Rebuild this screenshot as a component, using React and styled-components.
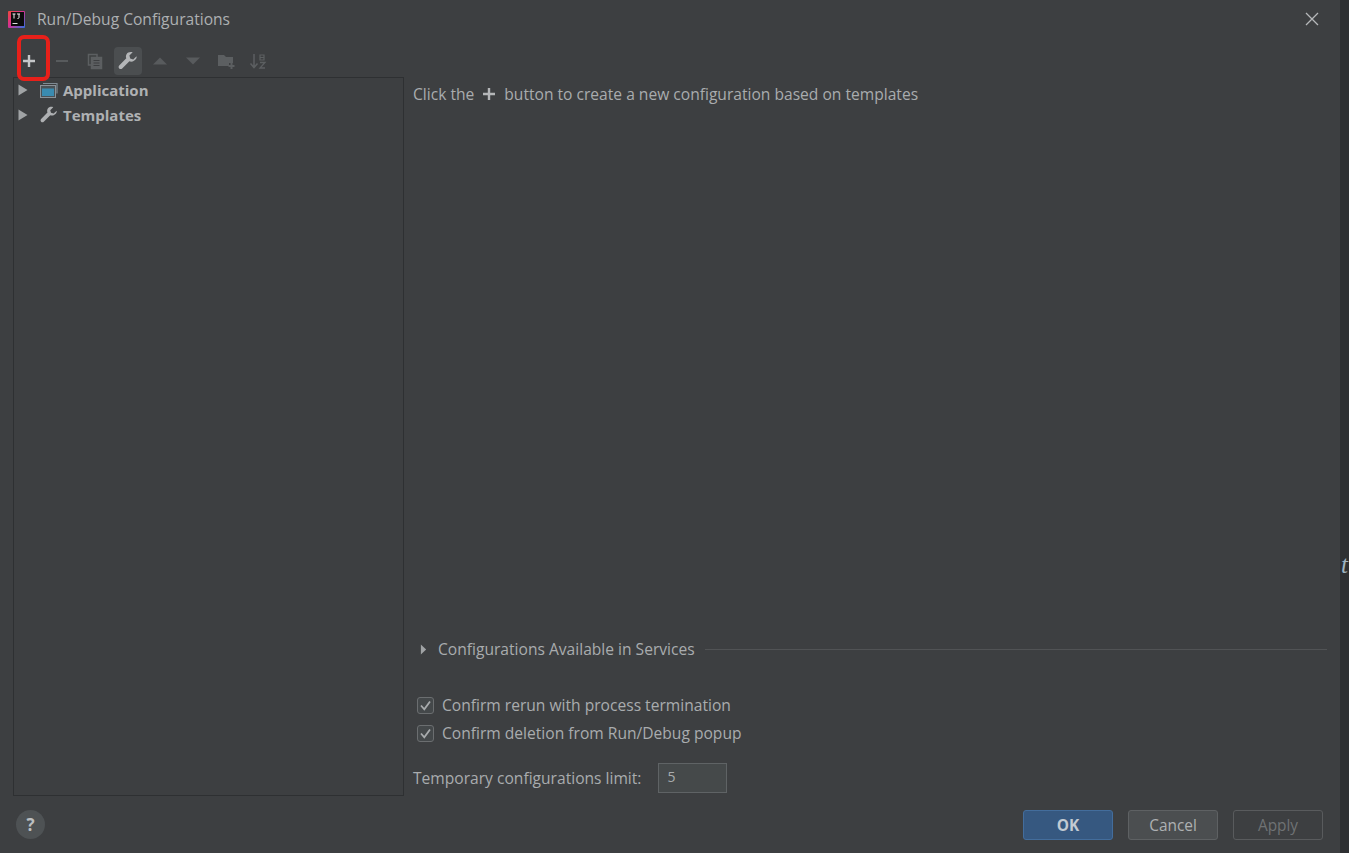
import React from 'react';
import styled, { createGlobalStyle } from 'styled-components';

const Global = createGlobalStyle`
  html, body { margin: 0; padding: 0; height: 100%; background: #3d3f41; }
  body { font-family: "Open Sans", "Noto Sans", sans-serif; overflow: hidden; }
`;

const Screen = styled.div`
  width: 1349px;
  height: 853px;
  display: flex;
  overflow: hidden;
`;

const Dialog = styled.div`
  width: 1340px;
  display: flex;
  flex-direction: column;
  background: #3d3f41;
  position: relative;
`;

const Strip = styled.div`
  flex: 1;
  background: #2e3032;
  display: flex;
  align-items: flex-start;
  padding-top: 550px;
  padding-left: 1px;
  font: italic 25px "Liberation Serif", serif;
  color: #9fb3bf;
  overflow: hidden;
  line-height: 30px;
`;

const TitleBar = styled.div`
  height: 38px;
  flex: none;
  display: flex;
  align-items: center;
  padding: 0 21px 0 8px;
  gap: 12px;
  color: #adb0b2;
  font-size: 15.6px;
`;

const Title = styled.span`
  flex: 1;
`;

const Body = styled.div`
  flex: 1;
  display: flex;
  padding: 0 13px 0 13px;
  min-height: 0;
`;

const LeftColumn = styled.div`
  width: 391px;
  flex: none;
  display: flex;
  flex-direction: column;
`;

const Toolbar = styled.div`
  height: 39px;
  box-sizing: border-box;
  padding-top: 7px;
  display: flex;
  align-items: center;
  position: relative;
`;

const ToolButton = styled.div`
  width: 28px;
  height: 28px;
  margin-right: ${p => p.$gap ?? 5}px;
  margin-left: ${p => p.$lead ?? 0}px;
  border-radius: 4px;
  display: flex;
  align-items: center;
  justify-content: center;
  background: ${p => (p.$active ? '#4b4e50' : 'transparent')};
  svg { display: block; }
`;

const Highlight = styled.div`
  position: absolute;
  left: 4px;
  top: -3px;
  width: 33px;
  height: 46px;
  box-sizing: border-box;
  border: 4px solid #e8201a;
  border-radius: 7px;
`;

const Tree = styled.div`
  flex: 1;
  border: 1px solid #2e3032;
`;

const TreeRow = styled.div`
  height: 25px;
  box-sizing: border-box;
  padding: 0 0 2px 3px;
  display: flex;
  align-items: center;
  font-weight: 700;
  font-size: 15px;
  color: #afb1b3;
`;

const RowIcon = styled.span`
  width: 20px;
  height: 18px;
  margin: 0 4px 0 10px;
  display: flex;
  align-items: center;
  justify-content: center;
`;

const RightColumn = styled.div`
  flex: 1;
  min-width: 0;
  display: flex;
  flex-direction: column;
  padding-left: 9px;
  color: #a9acae;
  font-size: 15.6px;
`;

const Hint = styled.div`
  margin-top: 46px;
  height: 20px;
  display: flex;
  align-items: center;
  gap: 8px;
`;

const Spacer = styled.div`
  flex: 1;
`;

const Collapsible = styled.div`
  display: flex;
  align-items: center;
  height: 20px;
  padding-left: 7px;
  margin-bottom: 36px;
`;

const CollapsibleLabel = styled.span`
  margin-left: 11px;
`;

const Rule = styled.div`
  flex: 1;
  height: 1px;
  background: #515355;
  margin-left: 10px;
`;

const CheckRow = styled.label`
  display: flex;
  align-items: center;
  height: 20px;
  margin-bottom: 8px;
  padding-left: 4px;
  gap: 8px;
`;

const CheckBox = styled.span`
  width: 17px;
  height: 17px;
  box-sizing: border-box;
  border: 1px solid #6b6e70;
  border-radius: 3px;
  background: #44484a;
  display: flex;
  align-items: center;
  justify-content: center;
`;

const LimitRow = styled.div`
  display: flex;
  align-items: center;
  height: 30px;
  margin: 12px 0 3px;
  gap: 17px;
`;

const LimitInput = styled.div`
  width: 69px;
  height: 30px;
  box-sizing: border-box;
  border: 1px solid #5f6365;
  background: #45494a;
  padding-left: 8px;
  line-height: 26px;
  font-size: 14px;
  color: #a9acae;
`;

const Footer = styled.div`
  height: 57px;
  flex: none;
  display: flex;
  align-items: center;
  padding: 0 17px 0 16px;
  gap: 15px;
`;

const HelpButton = styled.div`
  width: 29px;
  height: 29px;
  border-radius: 50%;
  background: #4e5254;
  color: #bcbfc1;
  font-size: 17px;
  font-weight: 700;
  display: flex;
  align-items: center;
  justify-content: center;
  margin-right: auto;
`;

const Button = styled.div`
  width: 90px;
  height: 30px;
  box-sizing: border-box;
  padding-top: 2px;
  border-radius: 3px;
  display: flex;
  align-items: center;
  justify-content: center;
  font-size: 15.4px;
  font-weight: ${p => (p.$primary ? 700 : 400)};
  color: ${p => (p.$primary ? '#c2cad2' : p.$disabled ? '#6f7274' : '#aeb1b3')};
  background: ${p => (p.$primary ? '#365880' : p.$disabled ? 'transparent' : '#4b4e50')};
  border: 1px solid ${p => (p.$primary ? '#436d9c' : p.$disabled ? '#595b5d' : '#5e6163')};
`;

const Arrow = ({ width = 12, height = 12, color = '#a0a3a5' }) => (
  <svg width={width} height={height} viewBox="0 0 12 12" preserveAspectRatio="none">
    <path d="M1.5 0.5 L10.5 6 L1.5 11.5 Z" fill={color} />
  </svg>
);

const AppLogo = () => (
  <svg width="17" height="17" viewBox="0 0 17 17">
    <defs>
      <linearGradient id="logo" x1="0" y1="0" x2="1" y2="1">
        <stop offset="0" stopColor="#f0483a" />
        <stop offset="0.45" stopColor="#d8308f" />
        <stop offset="1" stopColor="#2f6fe0" />
      </linearGradient>
    </defs>
    <rect width="17" height="17" rx="1" fill="url(#logo)" />
    <rect x="3" y="1" width="13" height="14" fill="#0c0c0c" />
    <path d="M4.500 3h3M6 3v4.500M9 3h3M11 3v3.500q0 1-1.500 1" stroke="#eee" strokeWidth="1" fill="none" />
    <rect x="4.500" y="12" width="5" height="1" fill="#ddd" />
  </svg>
);

const Plus = ({ size = 14, color = '#c5c7c9' }) => (
  <svg width={size} height={size} viewBox="0 0 14 14">
    <path d="M7 1v12M1 7h12" stroke={color} strokeWidth="2.400" />
  </svg>
);

const Minus = () => (
  <svg width="14" height="14" viewBox="0 0 14 14"><path d="M1 7h12" stroke="#585b5d" strokeWidth="2" /></svg>
);

const Copy = () => (
  <svg width="18" height="18" viewBox="0 0 18 18" fill="none" stroke="#5c5f61" strokeWidth="1.500">
    <path d="M5 13H2.500V2.500H11V5" />
    <rect x="5.500" y="5.500" width="10" height="11" fill="#5c5f61" />
    <path d="M7.500 8.500h6M7.500 11h6M7.500 13.500h6" stroke="#3d3f41" strokeWidth="1" />
  </svg>
);

const Wrench = ({ size = 20, color = '#b4b6b8' }) => (
  <svg width={size} height={size} viewBox="0 0 20 20">
    <path
      d="M18.500 5.200l-3.300 3.200-3-.8-.8-3L14.700 1.300c-2.300-.8-4.900-.2-6 1.600-.9 1.400-1 3-.4 4.400L1.200 14.500c-.8.800-.8 2.200 0 3s2.200.8 3 0l7.200-7.200c1.400.6 3.200.4 4.600-.6 1.800-1.200 3.100-2.900 2.500-4.500z"
      fill={color}
    />
  </svg>
);

const Caret = ({ down }) => (
  <svg width="16" height="10" viewBox="0 0 16 10">
    <path d={down ? 'M1 1.500h14L8 8.500z' : 'M1 8.500h14L8 1.500z'} fill="#585b5d" />
  </svg>
);

const NewFolder = () => (
  <svg width="19" height="17" viewBox="0 0 19 17">
    <path d="M1 2h6l2 2h7v6h-4v3H1z" fill="#5c5f61" />
    <path d="M14.500 10v6M11.500 13h6" stroke="#5c5f61" strokeWidth="2" />
  </svg>
);

const SortAz = () => (
  <svg width="18" height="18" viewBox="0 0 18 18" fill="none" stroke="#5c5f61" strokeWidth="1.500">
    <path d="M5 2v13M1.500 11.500L5 15.500l3.500-4" />
    <path d="M11 3h4v5h-4zM11 5.500h4" strokeWidth="1.200" />
    <path d="M11 10.500h5l-5 5.500h5" strokeWidth="1.300" />
  </svg>
);

const AppWindow = () => (
  <svg width="18" height="16" viewBox="0 0 18 16">
    <path d="M3 1.500h14v10" fill="none" stroke="#7f8b94" strokeWidth="1.200" />
    <rect x="0.500" y="3.500" width="15" height="12" fill="#4a5257" stroke="#8a9299" strokeWidth="1" />
    <rect x="2" y="6.500" width="12" height="7.500" fill="#3a8bb0" />
  </svg>
);

const Check = () => (
  <svg width="13" height="13" viewBox="0 0 13 13">
    <path d="M2 6.500l3.300 3.800L11 2.500" fill="none" stroke="#a8abad" strokeWidth="1.800" />
  </svg>
);

const Close = () => (
  <svg width="14" height="14" viewBox="0 0 14 14">
    <path d="M1 1l12 12M13 1L1 13" stroke="#b6b8ba" strokeWidth="1.300" />
  </svg>
);

export default function App() {
  return (
    <Screen>
      <Global />
      <Dialog>
        <TitleBar>
          <AppLogo />
          <Title>Run/Debug Configurations</Title>
          <Close />
        </TitleBar>
        <Body>
          <LeftColumn>
            <Toolbar>
              <ToolButton $lead={2} $gap={5}><Plus /></ToolButton>
              <ToolButton $gap={5}><Minus /></ToolButton>
              <ToolButton $gap={5}><Copy /></ToolButton>
              <ToolButton $gap={4} $active><Wrench /></ToolButton>
              <ToolButton $gap={5}><Caret /></ToolButton>
              <ToolButton $gap={5}><Caret down /></ToolButton>
              <ToolButton $gap={4}><NewFolder /></ToolButton>
              <ToolButton><SortAz /></ToolButton>
              <Highlight />
            </Toolbar>
            <Tree>
              <TreeRow>
                <Arrow />
                <RowIcon><AppWindow /></RowIcon>
                Application
              </TreeRow>
              <TreeRow>
                <Arrow />
                <RowIcon><Wrench size={18} color="#aeb0b2" /></RowIcon>
                Templates
              </TreeRow>
            </Tree>
          </LeftColumn>
          <RightColumn>
            <Hint>
              Click the <Plus color="#b4b6b8" /> button to create a new configuration based on templates
            </Hint>
            <Spacer />
            <Collapsible>
              <Arrow width={7} height={11} />
              <CollapsibleLabel>Configurations Available in Services</CollapsibleLabel>
              <Rule />
            </Collapsible>
            <CheckRow><CheckBox><Check /></CheckBox>Confirm rerun with process termination</CheckRow>
            <CheckRow><CheckBox><Check /></CheckBox>Confirm deletion from Run/Debug popup</CheckRow>
            <LimitRow>
              Temporary configurations limit:
              <LimitInput>5</LimitInput>
            </LimitRow>
          </RightColumn>
        </Body>
        <Footer>
          <HelpButton>?</HelpButton>
          <Button $primary>OK</Button>
          <Button>Cancel</Button>
          <Button $disabled>Apply</Button>
        </Footer>
      </Dialog>
      <Strip>t</Strip>
    </Screen>
  );
}
